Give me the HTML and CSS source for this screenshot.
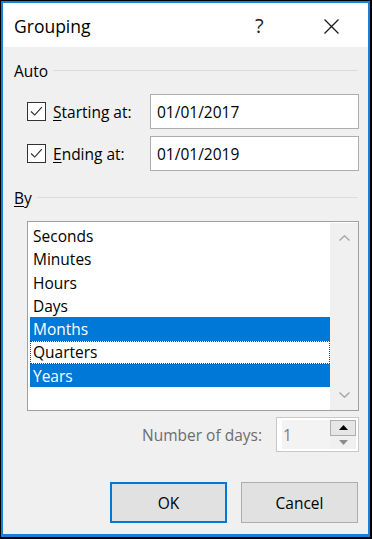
FILE: index.html
```html
<!DOCTYPE html>
<html>
<head>
<meta charset="utf-8">
<link rel="stylesheet" href="styles.css">
</head>
<body>
<div class="frame">
  <div class="win">
    <div class="titlebar">
      <span class="title">Grouping</span>
      <span class="help">?</span>
      <span class="close">
        <svg width="17" height="15" viewBox="0 0 17 15"><path d="M1.5 0.5 L15.5 14.5 M15.5 0.5 L1.5 14.5" stroke="#1a1a1a" stroke-width="1.3" fill="none"/></svg>
      </span>
    </div>
    <div class="content">
      <div class="group-head head-auto"><span>Auto</span><div class="rule"></div></div>
      <div class="field-row row-start">
        <span class="cb"><svg width="19" height="19" viewBox="0 0 19 19"><path d="M3.5 9.5 L7.5 13.5 L15.5 4.5" stroke="#222" stroke-width="1.2" fill="none"/></svg></span>
        <span class="lbl"><u>S</u>tarting at:</span>
        <div class="input">01/01/2017</div>
      </div>
      <div class="field-row row-end">
        <span class="cb"><svg width="19" height="19" viewBox="0 0 19 19"><path d="M3.5 9.5 L7.5 13.5 L15.5 4.5" stroke="#222" stroke-width="1.2" fill="none"/></svg></span>
        <span class="lbl"><u>E</u>nding at:</span>
        <div class="input">01/01/2019</div>
      </div>
      <div class="group-head head-by"><span><u>B</u>y</span><div class="rule"></div></div>
      <div class="listbox">
        <div class="items">
          <div class="item">Seconds</div>
          <div class="item">Minutes</div>
          <div class="item">Hours</div>
          <div class="item">Days</div>
          <div class="item sel">Months</div>
          <div class="item focus">Quarters</div>
          <div class="item sel">Years</div>
        </div>
        <div class="scroll">
          <div class="sbtn"><svg width="11" height="6" viewBox="0 0 11 6"><path d="M0.5 5.5 L5.5 0.8 L10.5 5.5" stroke="#a6a6a6" stroke-width="1.4" fill="none"/></svg></div>
          <div class="sbtn"><svg width="11" height="6" viewBox="0 0 11 6"><path d="M0.5 0.5 L5.5 5.2 L10.5 0.5" stroke="#a6a6a6" stroke-width="1.4" fill="none"/></svg></div>
        </div>
      </div>
      <div class="spin-row">
        <span class="spin-label">Number of days:</span>
        <div class="spin">
          <div class="spin-field">1</div>
          <div class="spin-btns">
            <div class="sb sb-up"><svg width="9" height="5" viewBox="0 0 9 5"><path d="M0 5 L4.5 0 L9 5 Z" fill="#000"/></svg></div>
            <div class="sb sb-down"><svg width="9" height="5" viewBox="0 0 9 5"><path d="M0 0 L4.5 5 L9 0 Z" fill="#8c8c8c"/></svg></div>
          </div>
        </div>
      </div>
      <div class="buttons">
        <div class="btn ok">OK</div>
        <div class="btn">Cancel</div>
      </div>
    </div>
  </div>
</div>
</body>
</html>
```

FILE: styles.css
```css
html, body {
  margin: 0;
  padding: 0;
}
body {
  font-family: "Open Sans", "Noto Sans", sans-serif;
  color: #000;
  width: 372px;
  height: 539px;
  overflow: hidden;
}
.frame {
  box-sizing: border-box;
  width: 372px;
  height: 539px;
  border-style: solid;
  border-color: #000;
  border-width: 1px 2px 2px 1px;
}
.win {
  box-sizing: border-box;
  height: 100%;
  border: 2px solid #1a7fd8;
  border-bottom-width: 3px;
  background: #f0f0f0;
  display: flex;
  flex-direction: column;
}
.titlebar {
  height: 44px;
  background: #fff;
  display: flex;
  align-items: center;
  padding-left: 11px;
  padding-top: 1px;
  box-sizing: border-box;
}
.title {
  font-size: 17.5px;
  flex: 1;
}
.help {
  font-size: 20px;
  font-weight: 400;
  width: 20px;
  margin-right: 48px;
  color: #1a1a1a;
}
.close {
  width: 17px;
  height: 15px;
  margin-right: 28px;
  margin-top: 2px;
  display: flex;
}
.content {
  flex: 1;
  display: flex;
  flex-direction: column;
  font-size: 15.5px;
}
.group-head {
  height: 20px;
  display: flex;
  align-items: center;
  padding-left: 11px;
  padding-right: 10px;
}
.group-head u, .lbl u {
  text-underline-offset: 2px;
}
.head-auto {
  margin-top: 14px;
}
.head-by {
  margin-top: 17px;
}
.rule {
  flex: 1;
  height: 1px;
  background: #dcdcdc;
  margin-left: 5px;
}
.head-by .rule {
  margin-left: 5px;
  margin-top: -2px;
}
.head-auto .rule {
  margin-top: -1px;
}
.field-row {
  height: 35px;
  display: flex;
  align-items: center;
  margin-left: 24px;
}
.row-start {
  margin-top: 13px;
}
.row-end {
  margin-top: 7px;
}
.cb {
  box-sizing: border-box;
  width: 19px;
  height: 19px;
  border: 1px solid #333;
  background: #fff;
  display: flex;
  align-items: center;
  justify-content: center;
}
.cb svg {
  display: block;
}
.lbl {
  padding-left: 7px;
  box-sizing: border-box;
  width: 104px;
}
.input {
  box-sizing: border-box;
  width: 209px;
  height: 35px;
  border: 1px solid #adadad;
  background: #fff;
  padding-left: 6px;
  display: flex;
  align-items: center;
}
.listbox {
  box-sizing: border-box;
  margin-top: 13px;
  margin-left: 24px;
  width: 332px;
  height: 190px;
  border: 1px solid #a0a0a0;
  background: #fff;
  display: flex;
  padding: 2px 0 1px 2px;
}
.items {
  width: 300px;
  display: flex;
  flex-direction: column;
}
.item {
  box-sizing: border-box;
  height: 23.33px;
  padding-left: 3px;
  padding-top: 2px;
  display: flex;
  align-items: center;
  line-height: 1;
}
.item.sel {
  background: #0078d7;
  color: #fff;
}
.item.focus {
  border: 1px dotted #444;
  padding-left: 2px;
  padding-top: 1px;
}
.scroll {
  flex: 1;
  margin-top: -1px;
  margin-bottom: -1px;
  background: #f0f0f0;
  display: flex;
  flex-direction: column;
  justify-content: space-between;
}
.sbtn {
  height: 30px;
  display: flex;
  align-items: center;
  justify-content: center;
}
.spin-row {
  margin-top: 6px;
  height: 35px;
  display: flex;
  align-items: center;
  justify-content: flex-end;
  padding-right: 9px;
}
.spin-label {
  color: #6d6d6d;
  margin-right: 14px;
}
.spin {
  box-sizing: border-box;
  width: 83px;
  height: 35px;
  border: 1px solid #c8c8c8;
  background: #fff;
  display: flex;
  padding: 2px 2px 2px 5px;
}
.spin-field {
  flex: 1;
  background: #f3f3f3;
  color: #7a7a7a;
  display: flex;
  align-items: center;
  padding-left: 1px;
}
.spin-btns {
  width: 26px;
  display: flex;
  flex-direction: column;
}
.sb {
  flex: 1;
  display: flex;
  align-items: center;
  justify-content: center;
  box-sizing: border-box;
}
.sb-up {
  background: #e6e6e6;
  border: 1px solid #adadad;
}
.sb-down {
  background: #f0f0f0;
}
.buttons {
  margin-top: 30px;
  display: flex;
  justify-content: flex-end;
  gap: 14px;
  padding-right: 10px;
}
.btn {
  box-sizing: border-box;
  width: 117px;
  height: 41px;
  border: 1px solid #adadad;
  background: #e1e1e1;
  display: flex;
  align-items: center;
  justify-content: center;
}
.btn.ok {
  border: 2px solid #0078d7;
}
```
